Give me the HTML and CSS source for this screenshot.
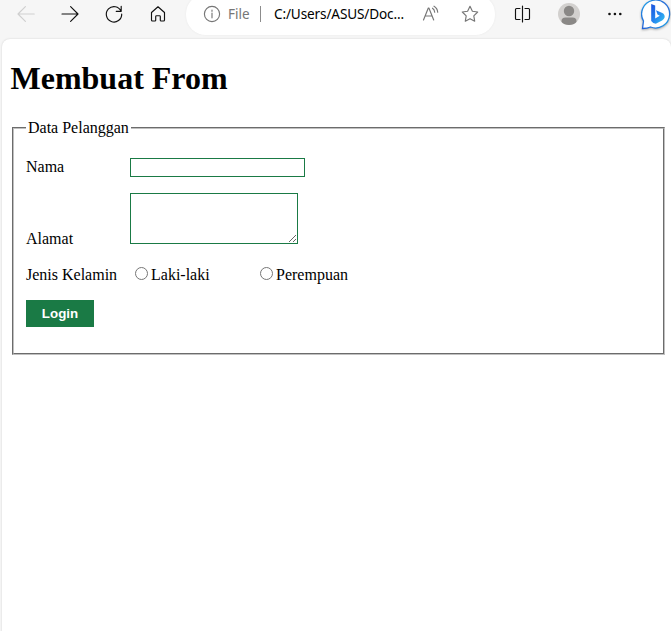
FILE: index.html
```html
<!DOCTYPE html>
<html lang="id">
<head>
<meta charset="utf-8">
<title>Membuat From</title>
<link rel="stylesheet" href="styles.css">
</head>
<body>
<header class="toolbar">
  <nav class="nav">
    <svg class="icon disabled" viewBox="0 0 20 20"><path d="M18.200 10H2.200M9.400 2.700 2 10l7.400 7.300"/></svg>
    <svg class="icon" viewBox="0 0 20 20"><path d="M2 10h15.800M10.600 2.700 18 10l-7.400 7.300"/></svg>
    <svg class="icon" viewBox="0 0 20 20"><path d="M17.100 7.300A7.700 7.700 0 1 0 17.700 10M17.200 2.200v5.100h-5"/></svg>
    <svg class="icon" viewBox="0 0 20 20"><path d="M3.500 8.500 10 2.800l6.500 5.700v7.500q0 1-1 1h-2.400q-.8 0-.8-.8v-3.700q0-.8-.8-.8h-3q-.8 0-.8.8v3.700q0 .8-.8.8H4.500q-1 0-1-1z"/></svg>
  </nav>
  <div class="address">
    <svg class="icon muted info" viewBox="0 0 20 20"><circle cx="10" cy="10" r="7.600"/><path d="M10 9v4.800M10 6v1.300"/></svg>
    <span class="scheme">File</span>
    <span class="divider"></span>
    <span class="url">C:/Users/ASUS/Doc...</span>
    <svg class="icon muted read" viewBox="0 0 20 20"><path d="m2.500 16 4.800-12h.6l4.800 12M4.300 12h6.600M11.500 4.200q2 1.300 2.200 4M13 2.200q3.300 1.800 3.700 6"/></svg>
    <svg class="icon muted star" viewBox="0 0 20 20"><path d="m10 2.300 2.400 4.900 5.300.8-3.900 3.800.9 5.400-4.700-2.500-4.700 2.500.9-5.400L2.300 8l5.300-.8z"/></svg>
  </div>
  <div class="actions">
    <svg class="icon split" viewBox="0 0 20 20"><path d="M8 4.500H4.500q-1 0-1 1v9q0 1 1 1H8M13 4.500h3.500q1 0 1 1v9q0 1-1 1H13M10.500 2v16"/></svg>
    <svg class="avatar" viewBox="0 0 22 22"><defs><clipPath id="face"><circle cx="11" cy="11" r="11"/></clipPath></defs><g clip-path="url(#face)"><path fill="#d2d0ce" d="M0 0h22v22H0z"/><circle cx="11" cy="8" r="5.200" fill="#8a8886"/><path fill="#8a8886" d="M3.500 22v-4q0-3.500 4-3.500h7q4 0 4 3.500v4z"/></g></svg>
    <svg class="icon more" viewBox="0 0 20 20"><g class="dots"><circle cx="4.500" cy="10" r="1.300"/><circle cx="9.900" cy="10" r="1.300"/><circle cx="15.300" cy="10" r="1.300"/></g></svg>
    <svg class="bing" viewBox="0 0 32 32"><defs><linearGradient id="ring" x1="0" y1="1" x2="1" y2="0"><stop offset="0" stop-color="#2360d8"/><stop offset=".5" stop-color="#209be8"/><stop offset="1" stop-color="#2b60d5"/></linearGradient><linearGradient id="letter" x1="0" y1="0" x2="1" y2="1"><stop offset="0" stop-color="#1b50db"/><stop offset=".5" stop-color="#2584ef"/><stop offset="1" stop-color="#36c8ee"/></linearGradient></defs><path d="M1.500 29.500 2.500 22A14 14 0 1 1 9.500 28q-3 1.500-8 1.500z" fill="#fff" stroke="url(#ring)" stroke-width="1.300"/><path d="m10.200 5 4 1.500v13l4.600-2.700-2.300-1.200-1.500-4.300 6.300 2.600q2.900 1.500 2.300 4.600-.5 1.700-2.500 2.900l-6.300 3.400q-2.600 0-4.600-2.800z" fill="url(#letter)"/></svg>
  </div>
</header>
<main class="page">
  <h1>Membuat From</h1>
  <form>
    <fieldset>
      <legend>Data Pelanggan</legend>
      <div class="row name"><label for="nama">Nama</label><input id="nama" type="text"></div>
      <div class="row addr"><label for="alamat">Alamat</label><textarea id="alamat"></textarea></div>
      <div class="row gender"><span class="label">Jenis Kelamin</span><label class="choice"><input type="radio" name="jk">Laki-laki</label><label class="choice"><input type="radio" name="jk">Perempuan</label></div>
      <button type="button">Login</button>
    </fieldset>
  </form>
</main>
</body>
</html>
```
FILE: styles.css
```css
* { box-sizing: border-box; }
html, body { height: 100%; }
body {
  margin: 0;
  overflow: hidden;
  background: #f6f6f6;
  color: #000;
  font: 16px/18px "Liberation Serif", serif;
}
.toolbar { display: flex; height: 39px; width: 680px; }
.nav { display: flex; gap: 24px; width: 186px; padding: 4px 0 0 16px; }
.icon {
  flex: none;
  width: 20px;
  height: 20px;
  fill: none;
  stroke: #111;
  stroke-width: 1.15;
  stroke-linejoin: round;
  stroke-linecap: round;
}
.disabled { stroke: #cfcfcf; }
.muted { stroke: #767676; }
.address {
  display: flex;
  width: 309px;
  height: 41px;
  margin-top: -6px;
  padding: 10px 0 0 16px;
  border-radius: 20px;
  background: #fff;
  box-shadow: 0 0 2px #e8e8e8;
  white-space: nowrap;
}
.scheme { width: 32px; margin-left: 6px; color: #767676; font: 13.500px/20px "Noto Sans", sans-serif; }
.divider { width: 1px; height: 16px; margin: 2px 13px 0 0; background: #8c8c8c; }
.url { width: 147px; font: 13.600px/20px "Noto Sans", sans-serif; letter-spacing: -.14px; }
.star { margin-left: 19px; }
.actions { display: flex; }
.split { margin: 4px 0 0 17px; }
.avatar { width: 22px; height: 22px; margin: 3px 0 0 26px; }
.more { margin: 4px 0 0 25px; }
.dots { fill: #111; stroke: none; }
.bing { flex: none; width: 32px; height: 32px; margin: -1px 0 0 16px; filter: drop-shadow(0 1px 1px #aaa); }
.page {
  width: 669px;
  height: 600px;
  margin-left: 2px;
  padding: 21px 6px 0 8px;
  border-radius: 8px 8px 0 0;
  background: #fff;
  box-shadow: 0 0 2px #ccc;
}
h1 { margin: 0 0 23px; padding-left: .5px; font-size: 32px; line-height: 36px; }
fieldset {
  height: 236px;
  margin: 0 0 0 2px;
  padding: 21px 12px 0;
  border: 2px groove #c0c0c0;
}
legend { padding: 0 2px; line-height: 18px; }
.row { display: flex; }
.row > label:first-child, .label { width: 104px; }
.name { height: 35px; }
.addr { height: 51px; align-items: flex-end; }
.addr label { margin-bottom: -4px; }
#nama, #alamat { border: 1px solid #1a7a45; background: #fff; margin: 0; }
#nama { width: 175px; height: 19px; }
#alamat { width: 168px; height: 51px; }
.gender { height: 27px; margin-top: 22px; }
.row > .choice { display: flex; width: 125px; padding-left: 5px; }
.choice input { width: 13px; height: 13px; margin: 1px 3px 0 0; }
button {
  display: block;
  width: 68px;
  height: 27px;
  margin-top: 7px;
  padding: 0;
  border: 0;
  background: #1a7a45;
  color: #fff;
  font: bold 13.333px "Liberation Sans", sans-serif;
}
```
